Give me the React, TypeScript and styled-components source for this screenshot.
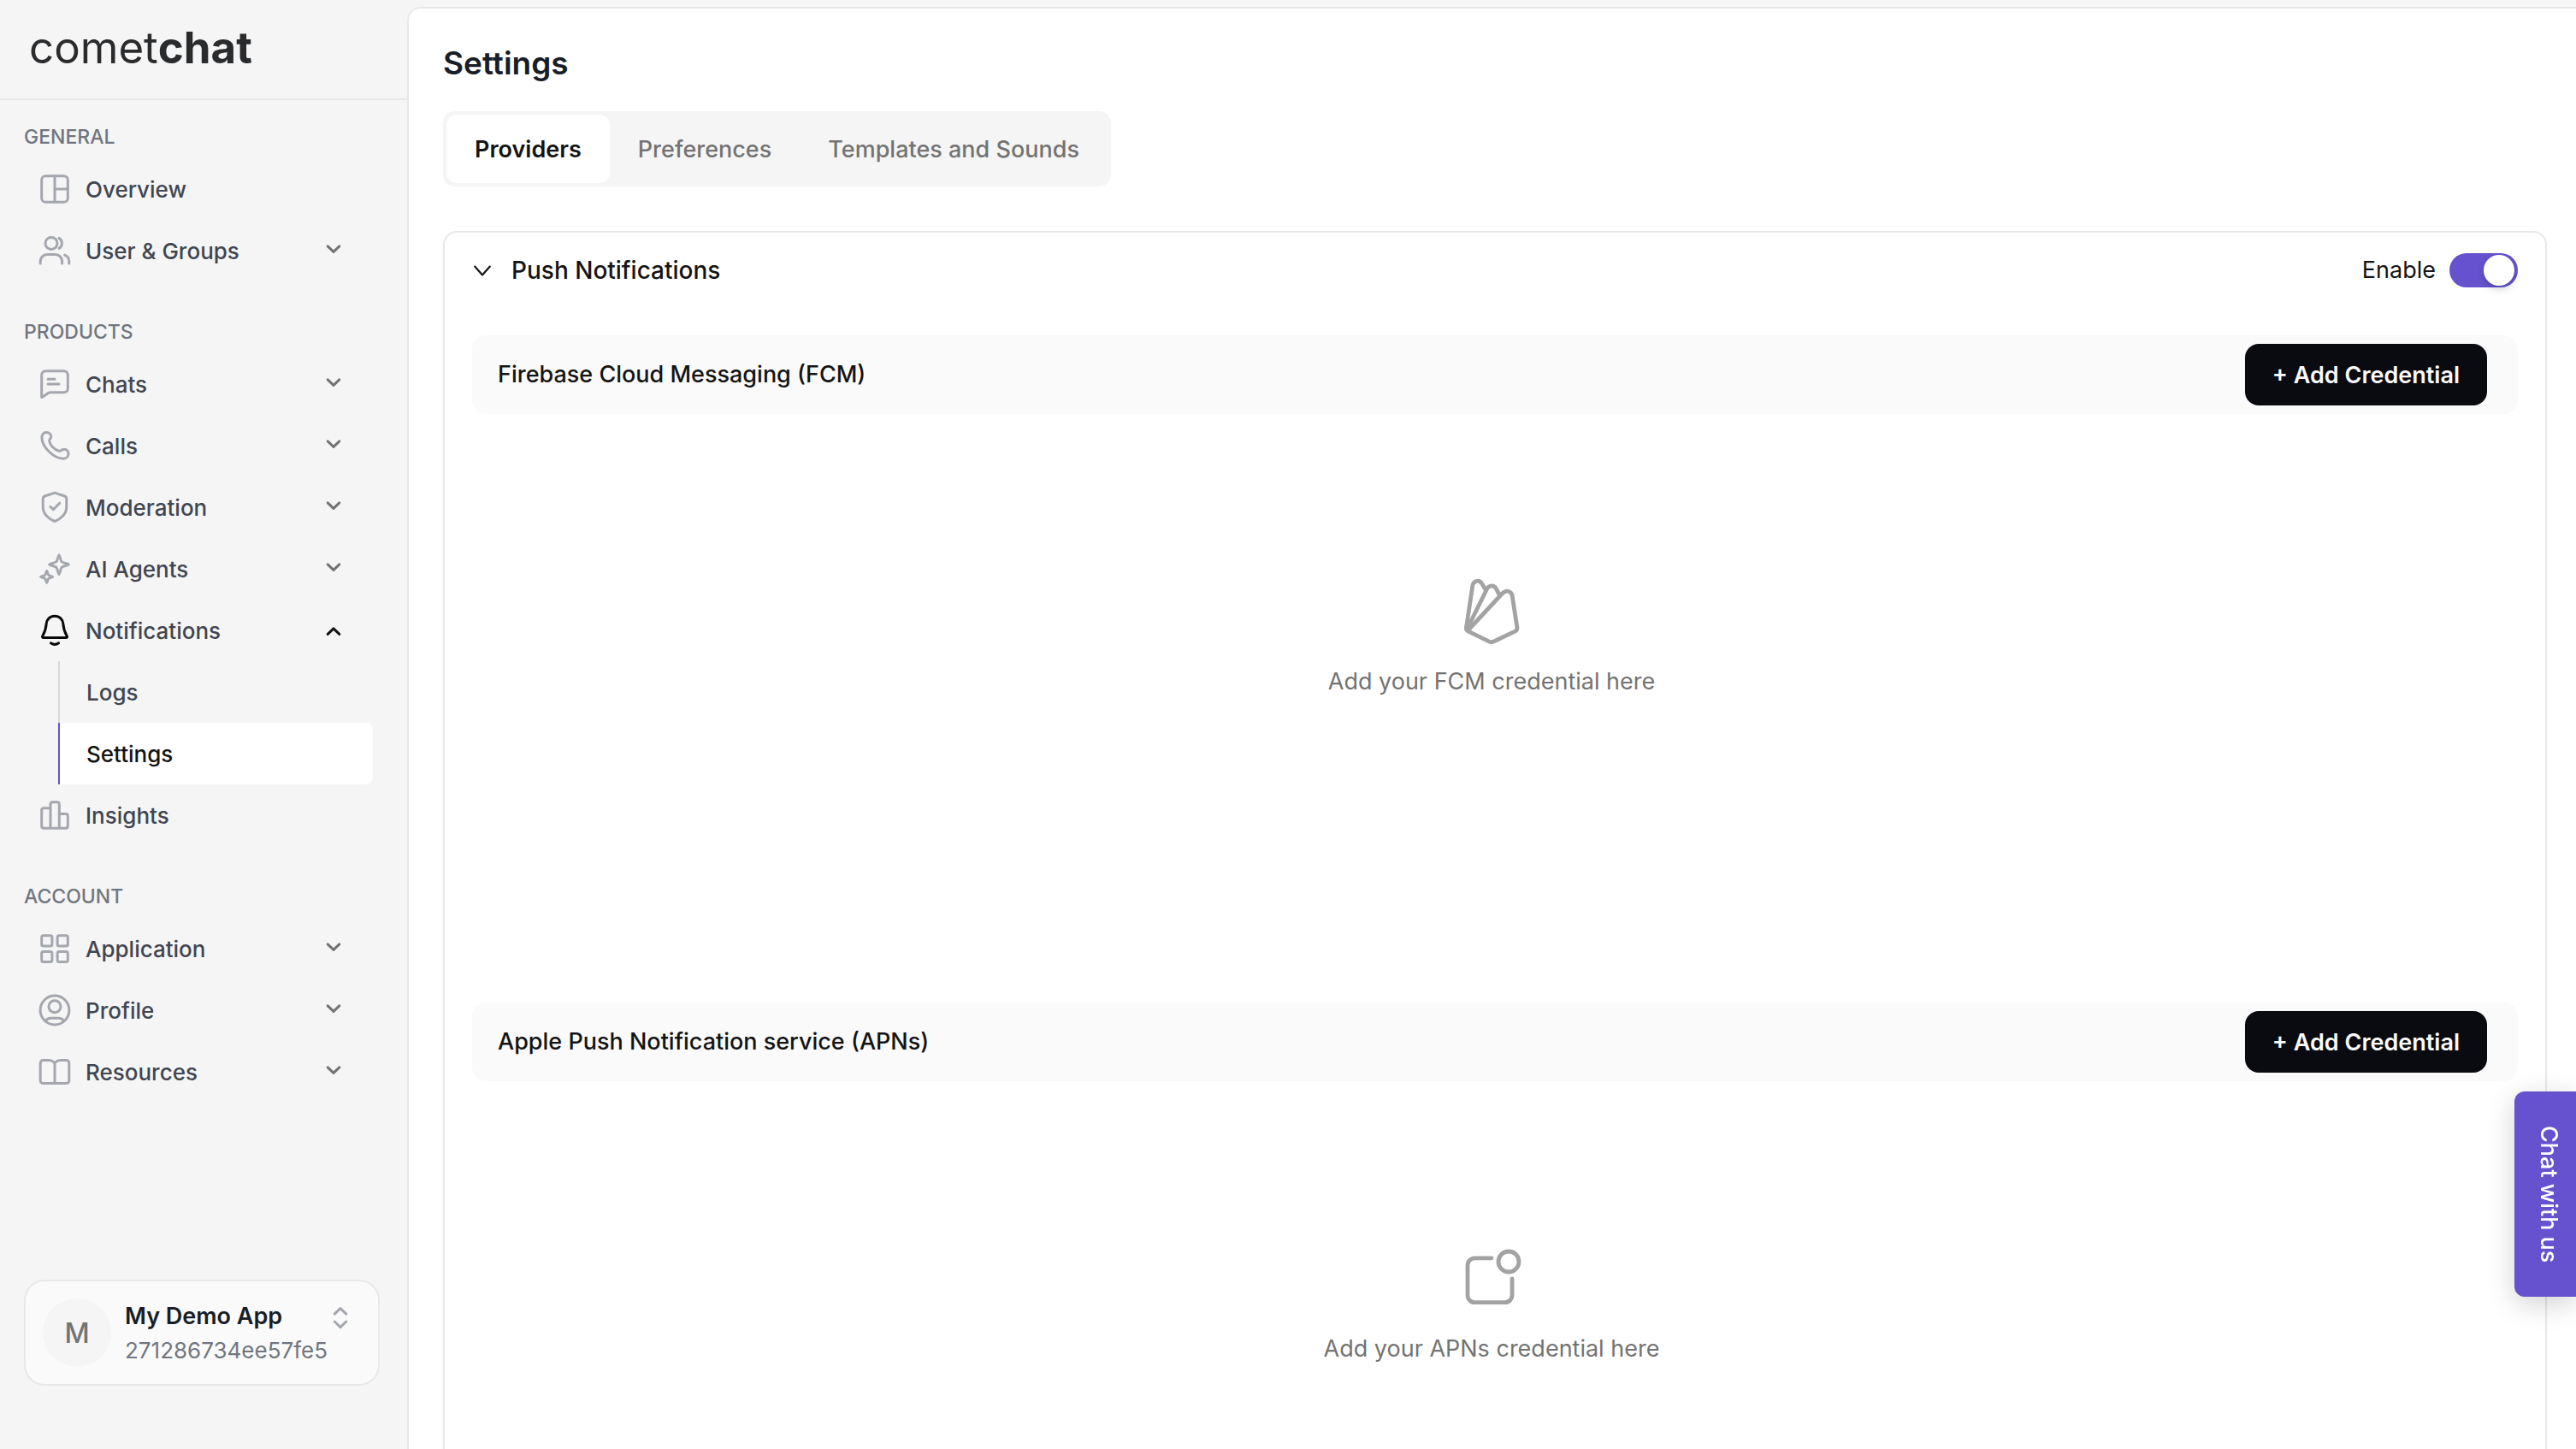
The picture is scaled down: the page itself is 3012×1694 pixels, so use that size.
import React, { useState } from "react";
import styled, { createGlobalStyle } from "styled-components";

const color = {
  canvas: "#f5f5f5",
  surface: "#ffffff",
  subtle: "#fafafa",
  line: "#e8e8e8",
  rail: "#d8d8d8",
  ink: "#141414",
  heading: "#181d27",
  nav: "#414651",
  label: "#717680",
  icon: "#a4a7ae",
  muted: "#737373",
  faint: "#a3a3a3",
  accent: "#6652ce",
  button: "#0a0b10",
};

const GlobalStyle = createGlobalStyle`
  *, *::before, *::after { box-sizing: border-box; }
  body {
    margin: 0;
    background: ${color.canvas};
    color: ${color.ink};
    font-family: Inter, "Liberation Sans", sans-serif;
    font-size: 27px;
    line-height: 40px;
    -webkit-font-smoothing: antialiased;
  }
  h1, h2, h3, p, ul { margin: 0; padding: 0; }
  ul { list-style: none; }
  a { color: inherit; text-decoration: none; }
  button { border: 0; background: none; color: inherit; font: inherit; cursor: pointer; }
`;

const Shell = styled.div`
  display: grid;
  grid-template-columns: 476px minmax(0, 1fr);
  height: 100vh;
`;

/* ---------- Sidebar ---------- */

const Sidebar = styled.aside`
  display: flex;
  flex-direction: column;
  min-height: 0;
`;

const Brand = styled.a`
  display: flex;
  align-items: center;
  height: 117px;
  padding: 0 34px 4px;
  border-bottom: 2px solid ${color.line};
  color: #2a2b2d;
  font-size: 51px;
  line-height: 56px;
`;

const BrandStrong = styled.strong`
  font-weight: 700;
`;

const Nav = styled.nav`
  display: flex;
  flex: 1;
  flex-direction: column;
  gap: 40px;
  padding: 24px 40px 0 28px;
`;

const NavLabel = styled.h2`
  margin-bottom: 8px;
  padding-top: 2px;
  color: ${color.label};
  font-size: 23px;
  font-weight: 500;
  line-height: 34px;
`;

const navRow = `
  display: flex;
  align-items: center;
  gap: 16px;
  width: 100%;
  height: 72px;
  padding: 0 32px 0 16px;
  font-size: 26px;
  font-weight: 500;
  text-align: left;
`;

const NavLink = styled.a`
  ${navRow}
  color: ${color.nav};
`;

const NavToggle = styled.button`
  ${navRow}
  color: ${color.nav};
`;

const NavText = styled.span`
  flex: 1;
  padding-top: 2px;
`;

const NavIcon = styled.svg<{ $active?: boolean }>`
  flex: none;
  width: 40px;
  height: 40px;
  color: ${(p) => (p.$active ? "#0a0a0a" : color.icon)};
`;

const Caret = styled.svg<{ $active?: boolean }>`
  flex: none;
  width: 28px;
  height: 28px;
  color: ${(p) => (p.$active ? color.ink : color.muted)};
`;

const SubList = styled.ul`
  margin-left: 40px;
`;

const SubLink = styled.a<{ $active?: boolean }>`
  display: flex;
  align-items: center;
  height: 72px;
  padding: 2px 0 0 31px;
  border-left: 2px solid ${(p) => (p.$active ? color.accent : color.rail)};
  border-radius: 0 8px 8px 0;
  background: ${(p) => (p.$active ? color.surface : "transparent")};
  color: ${(p) => (p.$active ? color.ink : color.nav)};
  font-size: 26px;
  font-weight: 500;
`;

const AppSwitcher = styled.button`
  display: flex;
  align-items: center;
  gap: 16px;
  height: 124px;
  margin: 0 32px 74px 28px;
  padding: 0 32px 0 20px;
  border: 2px solid ${color.line};
  border-radius: 24px;
  background: ${color.subtle};
  text-align: left;
`;

const Avatar = styled.span`
  display: grid;
  place-items: center;
  flex: none;
  width: 80px;
  height: 80px;
  padding-top: 2px;
  border-radius: 50%;
  background: ${color.canvas};
  color: ${color.muted};
  font-size: 32px;
  font-weight: 500;
`;

const AppInfo = styled.span`
  display: flex;
  flex: 1;
  flex-direction: column;
  padding-top: 2px;
`;

const AppName = styled.span`
  display: flex;
  align-items: center;
  justify-content: space-between;
  color: ${color.heading};
  font-weight: 600;
`;

const AppId = styled.span`
  color: ${color.label};
  font-size: 26px;
`;

const Sorter = styled.svg`
  width: 24px;
  height: 32px;
  color: ${color.icon};
`;

/* ---------- Content ---------- */

const Main = styled.main`
  display: flex;
  flex-direction: column;
  align-items: flex-start;
  min-height: 0;
  margin-top: 8px;
  padding: 40px 34px 40px 40px;
  border: solid ${color.line};
  border-width: 2px 0 0 2px;
  border-radius: 16px 0 0 0;
  background: ${color.surface};
  overflow-y: auto;
  scrollbar-width: none;
`;

const Title = styled.h1`
  color: ${color.heading};
  font-size: 37px;
  font-weight: 600;
  line-height: 48px;
`;

const Tabs = styled.div`
  display: flex;
  margin: 32px 0 52px;
  padding: 4px;
  border-radius: 14px;
  background: ${color.canvas};
`;

const Tab = styled.button<{ $active: boolean }>`
  height: 80px;
  padding: 2px 33px 0;
  border-radius: 12px;
  background: ${(p) => (p.$active ? color.surface : "transparent")};
  color: ${(p) => (p.$active ? color.ink : color.muted)};
  font-weight: ${(p) => (p.$active ? 600 : 500)};
`;

const Card = styled.section`
  flex: none;
  width: 100%;
  border: 2px solid ${color.line};
  border-radius: 16px;
`;

const CardHeader = styled.header`
  display: flex;
  align-items: center;
  justify-content: space-between;
  height: 88px;
  padding: 0 32px;
`;

const Disclosure = styled.button`
  display: flex;
  align-items: center;
  gap: 22px;
  padding: 0;
  font-size: 28px;
  font-weight: 500;
`;

const DisclosureIcon = styled.svg`
  width: 24px;
  height: 24px;
`;

const SwitchLabel = styled.label`
  display: flex;
  align-items: center;
  gap: 16px;
`;

const Switch = styled.input`
  appearance: none;
  display: flex;
  width: 80px;
  height: 40px;
  margin: 0;
  padding: 2px 4px;
  border-radius: 20px;
  background: ${color.rail};
  cursor: pointer;

  &::before {
    content: "";
    width: 36px;
    height: 36px;
    border-radius: 50%;
    background: ${color.surface};
    box-shadow: 0 4px 8px rgba(0, 35, 11, 0.2);
  }

  &:checked {
    justify-content: flex-end;
    background: ${color.accent};
  }
`;

const ProviderList = styled.div`
  padding: 32px 32px 0;
`;

const ProviderBar = styled.div`
  display: flex;
  align-items: center;
  justify-content: space-between;
  height: 92px;
  padding: 0 36px 0 30px;
  border-radius: 16px;
  background: ${color.subtle};
`;

const ProviderName = styled.h3`
  font-size: 27px;
  font-weight: 500;
`;

const AddButton = styled.button`
  height: 72px;
  padding: 2px 32px 0;
  border-radius: 16px;
  background: ${color.button};
  color: ${color.subtle};
  font-weight: 600;
`;

const Empty = styled.div`
  display: flex;
  flex-direction: column;
  align-items: center;
  gap: 22px;
  height: 688px;
  padding: 191px 8px 0 0;
  color: ${color.muted};
`;

const EmptyIcon = styled.svg`
  width: 80px;
  height: 80px;
  color: ${color.faint};
`;

const ChatTab = styled.button`
  position: fixed;
  right: 0;
  bottom: 178px;
  width: 72px;
  height: 240px;
  padding: 0 0 0 8px;
  border-radius: 12px 0 0 12px;
  background: ${color.accent};
  box-shadow: 0 8px 32px rgba(0, 0, 0, 0.18);
  color: ${color.surface};
  font-weight: 500;
  writing-mode: vertical-rl;
`;

/* ---------- Icons ---------- */

const stroke = {
  fill: "none",
  stroke: "currentColor",
  strokeWidth: 3,
  strokeLinecap: "round" as const,
  strokeLinejoin: "round" as const,
};

type IconName =
  | "overview" | "users" | "chats" | "calls" | "moderation" | "agents"
  | "bell" | "insights" | "application" | "profile" | "resources";

const glyphs: Record<IconName, React.ReactNode> = {
  overview: (
    <>
      <rect x="4.7" y="4.7" width="30.6" height="30.6" rx="4.6" />
      <path d="M20 4.7V35.3M20 20H35.3" />
    </>
  ),
  users: (
    <>
      <circle cx="16" cy="11.4" r="7" />
      <path d="M25 5.4A7 7 0 0 1 25 17.4M3.2 35V32.5A8 8 0 0 1 11.2 24.6H20.6A8 8 0 0 1 28.6 32.5V35M31.6 25.2A8 8 0 0 1 36.8 32.5V35" />
    </>
  ),
  chats: (
    <path d="M5 35.4Q4.7 36 4.7 34V9.2A4.5 4.5 0 0 1 9.2 4.7H30.8A4.5 4.5 0 0 1 35.3 9.2V25.3A4.5 4.5 0 0 1 30.8 29.8H14.6Q13.4 29.8 12.5 30.4ZM12 14.3H20M12 20H25" />
  ),
  calls: (
    <path d="M4.9 10.5C4.9 7 7 4.4 10.3 4.4C13.4 4.4 15.6 6.6 15.7 9.3C15.8 11.6 13.4 12.3 13.7 14.7C14.5 19.4 19.6 25 25 26.2C27.6 26.8 28.4 24.3 31 24.3C33.8 24.3 36 26.6 36 29.4C36 32.7 33.4 35.2 30 35.2C19 35.2 4.9 21.5 4.9 10.5Z" />
  ),
  moderation: (
    <path d="M20 3.1L31.6 7Q33.8 7.8 33.8 10.2V19.4C33.8 28 26.5 34.3 20 36.5C13.5 34.3 6.2 28 6.2 19.4V10.2Q6.2 7.8 8.4 7ZM14.9 19.4L18.3 22.7L25.7 15.2" />
  ),
  agents: (
    <path d="M25 3.8C25.7 3.8 26.8 10.4 28.2 11.8C29.6 13.2 36.4 14.3 36.4 15C36.4 15.7 29.6 16.8 28.2 18.2C26.8 19.6 25.7 26.4 25 26.4C24.3 26.4 23.2 19.6 21.8 18.2C20.4 16.8 13.6 15.7 13.6 15C13.6 14.3 20.4 13.2 21.8 11.8C23.2 10.4 24.3 3.8 25 3.8ZM10.7 22.2C11.1 22.2 11.8 26.2 12.8 27.2C13.8 28.2 17.8 28.9 17.8 29.3C17.8 29.7 13.8 30.4 12.8 31.4C11.8 32.4 11.1 36.5 10.7 36.5C10.3 36.5 9.6 32.4 8.6 31.4C7.6 30.4 3.5 29.7 3.5 29.3C3.5 28.9 7.6 28.2 8.6 27.2C9.6 26.2 10.3 22.2 10.7 22.2Z" />
  ),
  bell: (
    <path d="M20 3.2C14.4 3.2 10.4 7.2 10.1 12.6C9.8 18.4 9 21 5.8 26.4Q4.8 28.4 7 28.4H33Q35.2 28.4 34.2 26.4C31 21 30.2 18.4 29.9 12.6C29.6 7.2 25.6 3.2 20 3.2ZM15.4 34.8Q20 38 24.6 34.8" />
  ),
  insights: (
    <path d="M15 35.2H7.2Q4.7 35.2 4.7 32.8V14.2Q4.7 11.7 7.2 11.7H15M15 35.2V7.2Q15 4.7 17.4 4.7H22.9Q25.3 4.7 25.3 7.2V35.2ZM25.3 18.5H32.9Q35.3 18.5 35.3 21V32.8Q35.3 35.2 32.9 35.2H25.3" />
  ),
  application: (
    <>
      <rect x="4.7" y="4.7" width="12.2" height="12.2" rx="2" />
      <rect x="23.1" y="4.7" width="12.2" height="12.2" rx="2" />
      <rect x="4.7" y="23.4" width="12.2" height="12.2" rx="2" />
      <rect x="23.1" y="23.4" width="12.2" height="12.2" rx="2" />
    </>
  ),
  profile: (
    <>
      <circle cx="20" cy="20" r="16.9" />
      <circle cx="20" cy="15.7" r="7" />
      <path d="M9.2 32.6A8 6 0 0 1 15 29.2H25A8 6 0 0 1 30.8 32.6" />
    </>
  ),
  resources: (
    <path d="M20 11C20 8.6 17 6.6 12.8 6.6H6.4A3.2 3.2 0 0 0 3.2 9.8V30.4A3.2 3.2 0 0 0 6.4 33.6H33.6A3.2 3.2 0 0 0 36.8 30.4V9.8A3.2 3.2 0 0 0 33.6 6.6H27.2C23 6.6 20 8.6 20 11V33.6" />
  ),
};

const FirebaseIcon = () => (
  <EmptyIcon viewBox="0 0 80 80" {...stroke} strokeWidth={4.8} aria-hidden="true">
    <path d="M10.4 59L17.8 10C18.8 3.2 25.8 2.4 28.8 7.4L33.4 15" />
    <path d="M11.6 60L34.4 14C37 8.6 43.2 8.6 45.6 13.6L49 20" />
    <path d="M12.4 62L52.4 19C57 14.2 63.2 15.6 64.2 21.6L69.9 58.4Q70.3 61.6 67.4 63.2L42 75.2Q39.7 76.3 37.4 75.2L13 63.2Q10 61.6 10.4 58.4" />
  </EmptyIcon>
);

const AppleNotificationIcon = () => (
  <EmptyIcon viewBox="0 0 80 80" {...stroke} strokeWidth={4.8} aria-hidden="true">
    <path d="M40 15.8H20.5A8.5 8.5 0 0 0 12 24.3V59.2A8.5 8.5 0 0 0 20.5 67.7H55.5A8.5 8.5 0 0 0 64 59.2V40" />
    <circle cx="60" cy="20" r="12" />
  </EmptyIcon>
);

/* ---------- Data ---------- */

type Item = {
  label: string;
  icon: IconName;
  expandable?: boolean;
  children?: { label: string; active?: boolean }[];
};

const sections: { label: string; items: Item[] }[] = [
  {
    label: "GENERAL",
    items: [
      { label: "Overview", icon: "overview" },
      { label: "User & Groups", icon: "users", expandable: true },
    ],
  },
  {
    label: "PRODUCTS",
    items: [
      { label: "Chats", icon: "chats", expandable: true },
      { label: "Calls", icon: "calls", expandable: true },
      { label: "Moderation", icon: "moderation", expandable: true },
      { label: "AI Agents", icon: "agents", expandable: true },
      {
        label: "Notifications",
        icon: "bell",
        expandable: true,
        children: [{ label: "Logs" }, { label: "Settings", active: true }],
      },
      { label: "Insights", icon: "insights" },
    ],
  },
  {
    label: "ACCOUNT",
    items: [
      { label: "Application", icon: "application", expandable: true },
      { label: "Profile", icon: "profile", expandable: true },
      { label: "Resources", icon: "resources", expandable: true },
    ],
  },
];

const tabs = ["Providers", "Preferences", "Templates and Sounds"];

const providers = [
  {
    name: "Firebase Cloud Messaging (FCM)",
    hint: "Add your FCM credential here",
    Icon: FirebaseIcon,
  },
  {
    name: "Apple Push Notification service (APNs)",
    hint: "Add your APNs credential here",
    Icon: AppleNotificationIcon,
  },
];

function NavItem({ item }: { item: Item }) {
  const open = Boolean(item.children);
  const icon = (
    <NavIcon viewBox="0 0 40 40" {...stroke} $active={open} aria-hidden="true">
      {glyphs[item.icon]}
    </NavIcon>
  );

  if (!item.expandable) {
    return (
      <li>
        <NavLink href="#">
          {icon}
          <NavText>{item.label}</NavText>
        </NavLink>
      </li>
    );
  }

  return (
    <li>
      <NavToggle type="button" aria-expanded={open}>
        {icon}
        <NavText>{item.label}</NavText>
        <Caret viewBox="0 0 28 28" {...stroke} $active={open} aria-hidden="true">
          <path d={open ? "M7.2 18.4L14 11.8L20.8 18.4" : "M7.2 8.8L14 15.4L20.8 8.8"} />
        </Caret>
      </NavToggle>
      {item.children && (
        <SubList>
          {item.children.map((child) => (
            <li key={child.label}>
              <SubLink href="#" $active={child.active}>
                {child.label}
              </SubLink>
            </li>
          ))}
        </SubList>
      )}
    </li>
  );
}

export default function App() {
  const [tab, setTab] = useState(tabs[0]);
  const [enabled, setEnabled] = useState(true);

  return (
    <>
      <GlobalStyle />
      <Shell>
        <Sidebar>
          <Brand href="#">
            comet<BrandStrong>chat</BrandStrong>
          </Brand>
          <Nav>
            {sections.map((section) => (
              <div key={section.label}>
                <NavLabel>{section.label}</NavLabel>
                <ul>
                  {section.items.map((item) => (
                    <NavItem key={item.label} item={item} />
                  ))}
                </ul>
              </div>
            ))}
          </Nav>
          <AppSwitcher type="button">
            <Avatar>M</Avatar>
            <AppInfo>
              <AppName>
                My Demo App
                <Sorter viewBox="0 0 24 32" {...stroke} aria-hidden="true">
                  <path d="M5.2 13.2L12 6.6L18.8 13.2M5.2 22L12 28.6L18.8 22" />
                </Sorter>
              </AppName>
              <AppId>271286734ee57fe5</AppId>
            </AppInfo>
          </AppSwitcher>
        </Sidebar>

        <Main>
          <Title>Settings</Title>
          <Tabs role="tablist">
            {tabs.map((name) => (
              <Tab
                key={name}
                type="button"
                role="tab"
                aria-selected={tab === name}
                $active={tab === name}
                onClick={() => setTab(name)}
              >
                {name}
              </Tab>
            ))}
          </Tabs>

          <Card>
            <CardHeader>
              <Disclosure type="button" aria-expanded="true">
                <DisclosureIcon viewBox="0 0 24 24" {...stroke} strokeWidth={2.2} aria-hidden="true">
                  <path d="M3.2 7.6L12 17.4L20.8 7.6" />
                </DisclosureIcon>
                Push Notifications
              </Disclosure>
              <SwitchLabel htmlFor="push-enabled">
                Enable
                <Switch
                  id="push-enabled"
                  type="checkbox"
                  role="switch"
                  checked={enabled}
                  onChange={(e) => setEnabled(e.target.checked)}
                />
              </SwitchLabel>
            </CardHeader>

            <ProviderList>
              {providers.map(({ name, hint, Icon }) => (
                <div key={name}>
                  <ProviderBar>
                    <ProviderName>{name}</ProviderName>
                    <AddButton type="button">+ Add Credential</AddButton>
                  </ProviderBar>
                  <Empty>
                    <Icon />
                    <p>{hint}</p>
                  </Empty>
                </div>
              ))}
            </ProviderList>
          </Card>
        </Main>
      </Shell>
      <ChatTab type="button">Chat with us</ChatTab>
    </>
  );
}
